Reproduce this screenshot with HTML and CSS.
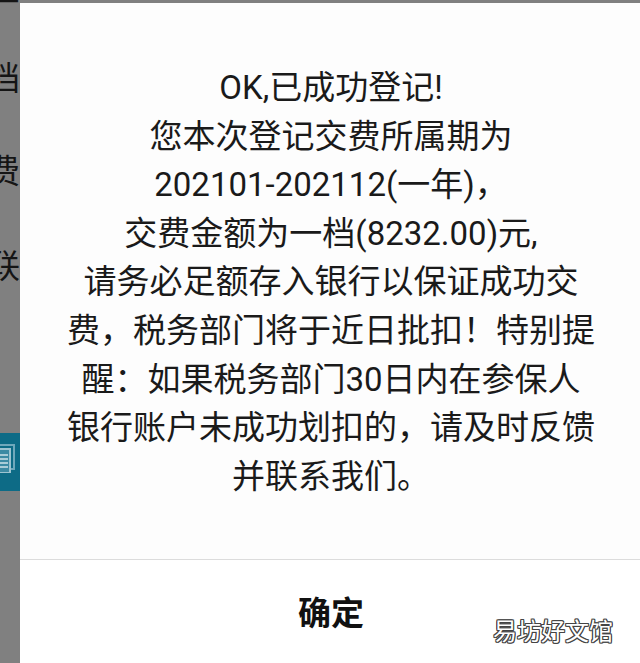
FILE: index.html
```html
<!DOCTYPE html>
<html lang="zh-CN">
<head>
    <meta charset="UTF-8">
    <meta name="viewport" content="width=device-width, initial-scale=1.0">
    <title>登记结果</title>
    <link rel="stylesheet" href="styles.css">
</head>
<body>
    <div class="screen">
        <!-- 弹窗后面被遮住的页面 -->
        <div class="behind">
            <div class="behind-col">
                <span class="behind-char first">登</span>
                <span class="behind-char">档</span>
                <span class="behind-char">费</span>
                <span class="behind-char">联</span>
                <div class="behind-tile">
                    <svg width="20" height="30" viewBox="0 0 20 30">
                        <rect x="-4" y="2" width="18" height="24" fill="none" stroke="#6fa8bb" stroke-width="2"/>
                        <rect x="-8" y="6" width="18" height="24" fill="#3d8aa3" stroke="#9cc3d0" stroke-width="2"/>
                        <line x1="-6" y1="12" x2="8" y2="12" stroke="#cfe2e8" stroke-width="1.5"/>
                        <line x1="-6" y1="16" x2="8" y2="16" stroke="#cfe2e8" stroke-width="1.5"/>
                        <line x1="-6" y1="20" x2="8" y2="20" stroke="#cfe2e8" stroke-width="1.5"/>
                        <line x1="-6" y1="24" x2="8" y2="24" stroke="#cfe2e8" stroke-width="1.5"/>
                    </svg>
                </div>
            </div>
        </div>

        <div class="dialog">
            <div class="dialog-message">
                OK,已成功登记!<br>
                您本次登记交费所属期为<br>
                202101-202112(一年)，<br>
                交费金额为一档(8232.00)元,<br>
                请务必足额存入银行以保证成功交<br>
                费，税务部门将于近日批扣！特别提<br>
                醒：如果税务部门30日内在参保人<br>
                银行账户未成功划扣的，请及时反馈<br>
                并联系我们。
            </div>
            <div class="dialog-actions">
                <button class="dialog-btn">确定</button>
            </div>
        </div>

        <div class="watermark">易坊好文馆</div>
    </div>
</body>
</html>
```

FILE: styles.css
```css
html, body {
    margin: 0;
    padding: 0;
}

body {
    font-family: Roboto, "Noto Sans CJK SC", sans-serif;
    background-color: #808080;
    color: #1a1a1a;
    overflow: hidden;
}

.screen {
    position: relative;
    display: flex;
    width: 640px;
    height: 663px;
    overflow: hidden;
}

/* page under the mask */
.behind {
    width: 20px;
    flex-shrink: 0;
    overflow: hidden;
}

.behind-col {
    display: flex;
    flex-direction: column;
    width: 40px;
    margin-left: -13px;
}

.behind-char {
    font-size: 33px;
    line-height: 33px;
    height: 33px;
    color: #151515;
    margin-top: 60px;
}

.behind-char.first {
    margin-top: -28px;
}

.behind-char:nth-child(2) {
    margin-top: 57px;
}

.behind-char:nth-child(4) {
    margin-top: 62px;
}

.behind-tile {
    margin-top: 150px;
    margin-left: 13px;
    width: 20px;
    height: 58px;
    background-color: #0d6b86;
    padding-top: 10px;
    box-sizing: border-box;
}

.behind-tile svg {
    display: block;
}

/* dialog */
.dialog {
    flex: 1;
    margin-top: 3px;
    margin-right: -2px;
    background-color: #fff;
    border-radius: 12px 12px 0 0;
    display: flex;
    flex-direction: column;
}

.dialog-message {
    height: 557px;
    box-sizing: border-box;
    padding-top: 61px;
    font-size: 33px;
    line-height: 48.6px;
    text-align: center;
    white-space: nowrap;
    background-color: #fdfdfd;
    border-bottom: 1px solid #dcdcdc;
}

.dialog-actions {
    flex: 1;
    display: flex;
    justify-content: center;
    padding-top: 30px;
}

.dialog-btn {
    align-self: flex-start;
    border: none;
    background: none;
    padding: 0;
    font-family: inherit;
    font-size: 33px;
    font-weight: bold;
    line-height: 48px;
    color: #111;
}

.watermark {
    position: absolute;
    left: 493px;
    top: 614px;
    font-size: 24px;
    line-height: 36px;
    color: #fff;
    text-shadow:
        1px 0 0 #444, -1px 0 0 #444, 0 1px 0 #444, 0 -1px 0 #444,
        1px 1px 0 #444, -1px -1px 0 #444, 1px -1px 0 #444, -1px 1px 0 #444;
}
```
